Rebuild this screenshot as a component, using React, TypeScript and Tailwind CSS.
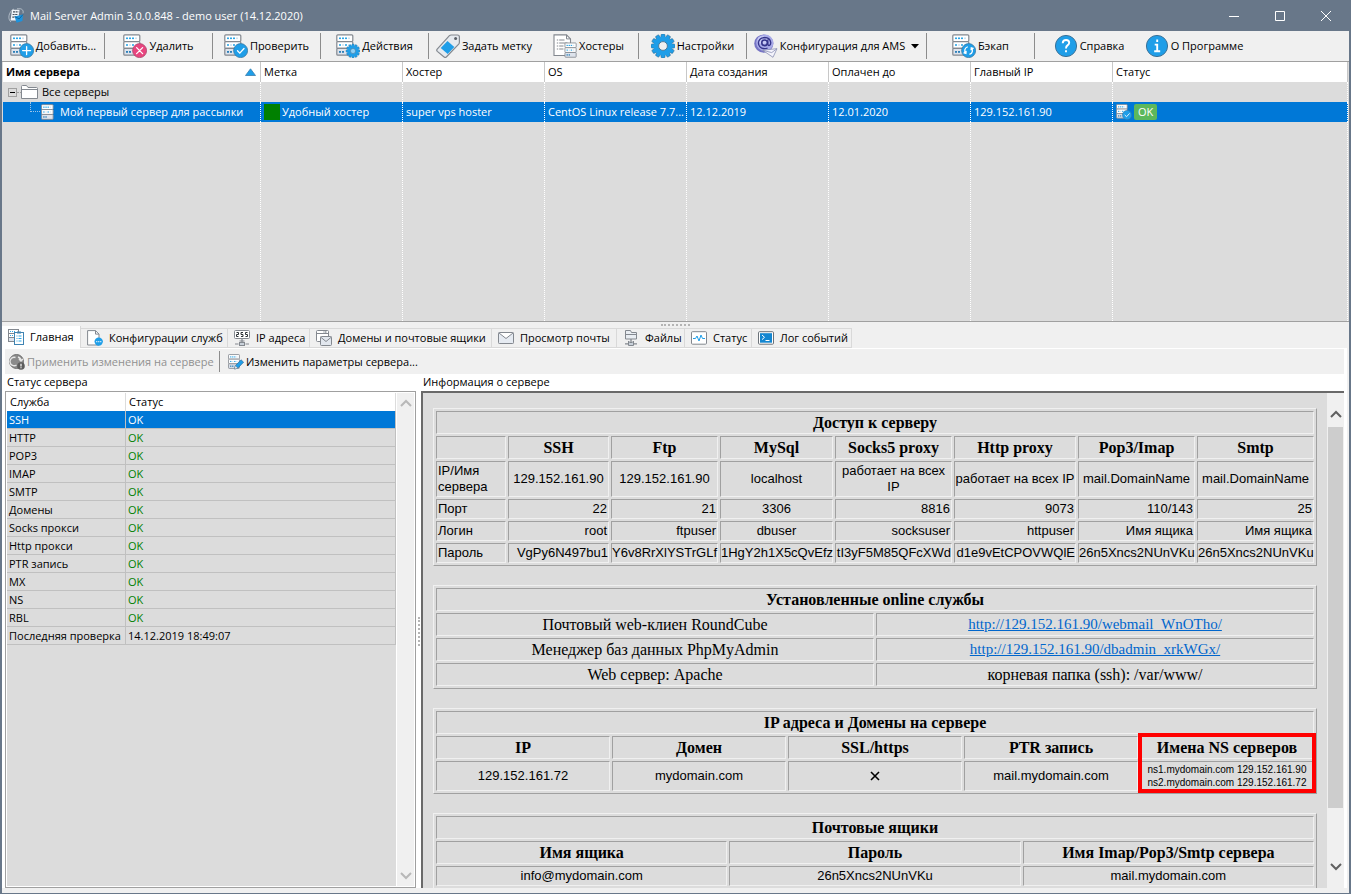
import React, { useState } from 'react';
import clsx from 'clsx';

type Badge = 'add' | 'remove' | 'check' | 'gear' | 'sync';

const GEAR_TEETH = [0, 30, 60, 90, 120, 150, 180, 210, 240, 270, 300, 330];

const Gear = ({ cx, cy, r, hole }: { cx: number; cy: number; r: number; hole: string }) => (
  <g transform={`translate(${cx} ${cy}) scale(${r / 12})`}>
    {GEAR_TEETH.map(a => (
      <rect key={a} x="-2" y="-12" width="4" height="5" rx="1.2" fill="#1f9ee8" stroke="#2b6f9b" strokeWidth=".6" transform={`rotate(${a})`} />
    ))}
    <circle r="9.6" fill="#1f9ee8" />
    <circle r="4.4" fill={hole} stroke="#4d7c9b" strokeWidth="1" />
  </g>
);

// Rack of three units, shared by most of the icons
const Rack = () => (
  <g>
    <g fill="#fff" stroke="#83888f" strokeWidth="1.2">
      <rect x=".8" y=".8" width="16" height="6.8" rx="1" />
      <rect x=".8" y="7.6" width="16" height="6.8" rx="1" />
      <rect x=".8" y="14.4" width="16" height="6.8" rx="1" fill="#dde3ec" />
    </g>
    <g fill="#2ea6e6">
      <rect x="3" y="3.5" width="2" height="1.6" />
      <rect x="6" y="3.5" width="2" height="1.6" />
      <rect x="9" y="3.5" width="2" height="1.6" />
      <rect x="3" y="10.2" width="2" height="1.6" />
      <rect x="9" y="10.2" width="2" height="1.6" />
      <rect x="3" y="17" width="2" height="1.8" fill="#2c7fb8" />
      <rect x="6" y="17" width="2" height="1.8" fill="#2c7fb8" />
    </g>
    <g fill="#cfe3f0">
      <rect x="12" y="3.5" width="2" height="1.6" />
      <rect x="6" y="10.2" width="2" height="1.6" />
      <rect x="12" y="10.2" width="2" height="1.6" />
    </g>
  </g>
);

const ServerIcon = ({ badge, className = 'size-6' }: { badge?: Badge; className?: string }) => (
  <svg viewBox={badge ? '0 0 24 24' : '0 0 18 22'} className={clsx('shrink-0', className)} fill="none">
    <Rack />
    {badge === 'gear' && <Gear cx={17} cy={17} r={7} hole="#8fd0f5" />}
    {badge && badge !== 'gear' && (
      <circle cx="16.6" cy="16.6" r="7" fill={badge === 'remove' ? '#e8457f' : '#1f9ee8'} stroke={badge === 'remove' ? '#a8456b' : '#3477a3'} strokeWidth=".8" />
    )}
    <g stroke="#fff" strokeWidth="1.3" strokeLinecap="round">
      {badge === 'add' && <path d="M16.6 12.6v8M12.6 16.6h8" />}
      {badge === 'remove' && <path d="m13.6 13.6 6 6m0-6-6 6" />}
      {badge === 'check' && <path d="m13.5 16.8 2.3 2.3 4.2-4.6" />}
      {badge === 'sync' && (
        <path d="M15.3 13a3.9 3.9 0 0 0-1.6 6.2m-1.7-.3 1.9.5.2-1.9M17.9 20.2a3.9 3.9 0 0 0 1.6-6.2m1.7.3-1.9-.5-.2 1.9" />
      )}
    </g>
  </svg>
);

const TagIcon = () => (
  <svg viewBox="0 0 24 24" className="size-6 shrink-0" fill="none">
    <path d="M1.2 15.2 13.4 1.7q.7-.7 1.8-.7h6.3q1.9 0 1.9 1.9v5.4q0 1-.7 1.8L10.3 23q-1.1 1-2.2 0L1.3 17.4q-1.1-1-.1-2.2z" fill="#e6eaef" stroke="#83888f" strokeWidth="1.2" />
    <path d="m11.5 7 6.8 5.9-6.6 7L4.7 14z" fill="#1f9ee8" />
    <circle cx="19.6" cy="4.6" r="1.5" fill="#5b6067" />
  </svg>
);

const HostersIcon = () => (
  <svg viewBox="0 0 24 24" className="size-6 shrink-0" fill="none">
    <path d="M1 .9h12.5l4 4V21.5H1z" fill="#fff" stroke="#83888f" strokeWidth="1.1" />
    <path d="M13.5.9v4h4" stroke="#83888f" />
    <path d="M3.8 6h1.4m1 0h5.3M3.8 9h1.4m1 0h8.3M3.8 12h1.4m1 0h4.3M3.8 15h1.4m1 0h4.3" stroke="#83888f" />
    <g transform="translate(11.4 8.4) scale(.7)"><Rack /></g>
  </svg>
);

const SettingsIcon = () => (
  <svg viewBox="0 0 24 24" className="size-6 shrink-0"><Gear cx={12} cy={12} r={12} hole="#f0f0f0" /></svg>
);

const AmsIcon = () => (
  <svg viewBox="0 0 24 24" className="size-6 shrink-0" fill="none">
    <ellipse cx="9.8" cy="9.6" rx="9.6" ry="9.2" fill="#7674c4" />
    <ellipse cx="10.8" cy="8.8" rx="8.6" ry="8.2" fill="#a9abe8" />
    <ellipse cx="9" cy="6" rx="5.5" ry="4" fill="#c9cbf6" />
    <circle cx="10.6" cy="8.8" r="2.8" stroke="#35348a" strokeWidth="1.6" />
    <path d="M13.8 5.6V10q.3 1.8 1.6 1.4 1.5-.7 1.3-3-.6-4.6-5.9-4.9-6 .2-6.4 5.5.3 5.2 6 5.7 1.9 0 3.2-.7" stroke="#35348a" strokeWidth="1.3" />
    <path d="m8.5 16.2 14.5-1.5-4 8.6z" fill="#f4f4fc" stroke="#8a8fb3" strokeWidth=".8" />
    <path d="m8.5 16.2 9.2 2.4 5.3-3.9" stroke="#8a8fb3" strokeWidth=".8" />
  </svg>
);

const RoundIcon = ({ kind }: { kind: 'help' | 'info' }) => (
  <svg viewBox="0 0 24 24" className="size-6 shrink-0" fill="none">
    <circle cx="12" cy="12" r="10.6" fill="#1f9ee8" stroke="#3c7298" />
    {kind === 'help' ? (
      <g stroke="#fff" strokeWidth="1.9">
        <path d="M8.7 9.2q.2-3.2 3.4-3.2 3 0 3.1 2.8 0 1.5-1.7 2.6-1.5 1-1.5 3" />
        <path d="M12 16.2v2" />
      </g>
    ) : (
      <path d="M12.2 5.6v2.3M9.7 10.6h2.5v6.6m-3 .1h6" stroke="#fff" strokeWidth="1.9" />
    )}
  </svg>
);

const AppIcon = () => (
  <svg viewBox="0 0 16 16" className="size-4 shrink-0" fill="none">
    <path d="M3 14C-1 11 1 3 6 1M9 .8c4-.8 7 .8 6 4.5" stroke="#b5bfca" strokeWidth=".9" />
    <path d="M4 1.8h7.5l-1.2 10.7H2.5z" fill="#eef3f8" />
    <path d="M5 3.8h5.5M4.6 6.5h5.5M4.3 9.2h3.5" stroke="#44505d" strokeWidth="1.2" strokeDasharray="2 .6" />
    <path d="m6.6 8.5 8.4-2-.6 6.4-5.8 1.9z" fill="#1d93dd" />
    <path d="m6.6 8.5 4.6 2.4L15 6.5" stroke="#0b5c93" strokeWidth=".8" />
  </svg>
);

const MainTabIcon = () => (
  <svg viewBox="0 0 16 16" className="size-4 shrink-0" fill="none" stroke="#83888f">
    <rect x=".5" y=".5" width="10" height="4" fill="#fff" />
    <rect x=".5" y="4.5" width="10" height="4" fill="#fff" />
    <rect x=".5" y="8.5" width="10" height="4" fill="#dde3ec" />
    <path d="M2 2.5h6M2 6.5h3" stroke="#2ea6e6" strokeDasharray="1 1" />
    <rect x="6.5" y="3.5" width="9" height="12" fill="#fff" stroke="#3f84b3" />
    <path d="M9 3.5h4" stroke="#3f84b3" strokeWidth="2" />
    <path d="M8.5 7h1m1 0h3M8.5 9.5h1m1 0h3M8.5 12h1m1 0h3" stroke="#2ea6e6" />
  </svg>
);

const ConfigTabIcon = () => (
  <svg viewBox="0 0 16 16" className="size-4 shrink-0" fill="none">
    <path d="M.6.6h7.9L12 4.1V15H.6z" fill="#fff" stroke="#83888f" />
    <path d="M8.5.6v3.5H12" stroke="#83888f" />
    <circle cx="11.7" cy="11.6" r="4.2" fill="#1f9ee8" />
    <path d="M9.3 11.6h1m1 0h1m1 0h1" stroke="#fff" strokeWidth="1.1" />
  </svg>
);

const IpTabIcon = () => (
  <svg viewBox="0 0 16 16" className="size-4 shrink-0" fill="none" stroke="#83888f">
    <rect x=".5" y=".5" width="15" height="8" rx="1" fill="#fff" />
    <path d="M2.5 2.5h2v2h-2v2h2M9 2.5H7v2h2v2H7M13.5 2.5h-2v2h2v2h-2" stroke="#2d3237" />
    <path d="M8 9v5M5.5 11h5M1 14h3.5m7 0H15" strokeWidth="1.2" />
    <rect x="5.5" y="12.5" width="5" height="3" fill="#c9d1da" />
  </svg>
);

const DomainsTabIcon = () => (
  <svg viewBox="0 0 16 16" className="size-4 shrink-0" fill="none" stroke="#83888f">
    <rect x=".5" y=".5" width="12" height="11" rx="1" fill="#fff" />
    <path d="M.5 3.5h12" />
    <path d="M7.5 2H11" stroke="#55606b" strokeDasharray="1 .5" />
    <rect x="4.5" y="6.5" width="11" height="9" rx="1" fill="#e2e7ee" />
    <path d="m4.5 7 5.5 4.500L15.500 7" />
  </svg>
);

const MailTabIcon = () => (
  <svg viewBox="0 0 16 12" className="h-3 w-4 shrink-0" fill="none" stroke="#83888f">
    <rect x=".5" y=".5" width="15" height="11" rx=".8" fill="#e6ebf2" />
    <path d="m1 1 7 5.5L15 1" fill="#fff" />
  </svg>
);

const FilesTabIcon = () => (
  <svg viewBox="0 0 16 16" className="size-4 shrink-0" fill="none" stroke="#83888f">
    <path d="M2.5.5h5l1 2h5V9h-11z" fill="#e9edf2" />
    <path d="M2.5 4.5h11" />
    <path d="M8 9v3M2 13.8h3.5m5 0H14" strokeWidth="1.3" />
    <path d="m5.5 11 1.2 1.5h2.6l1.2-1.5v4.5h-5z" fill="#c9d1da" />
  </svg>
);

const StatusTabIcon = () => (
  <svg viewBox="0 0 16 14" className="h-3.5 w-4 shrink-0" fill="none">
    <rect x=".5" y=".7" width="15" height="12.5" rx="1" fill="#fff" stroke="#83888f" />
    <path d="M2 7.500h2.500L6 5l2 5 2-6 1.500 3.500H14" stroke="#1f9ee8" />
  </svg>
);

const LogTabIcon = () => (
  <svg viewBox="0 0 16 14" className="h-3.5 w-4 shrink-0" fill="none">
    <rect x=".5" y=".7" width="15" height="12.5" rx="1" fill="#fff" stroke="#6b7178" />
    <rect x="2" y="2.2" width="12" height="9.5" fill="#1486d0" />
    <path d="m4 4 2.500 2.300L4 8.600M7.500 9.500h4" stroke="#fff" />
  </svg>
);

const ApplyIcon = () => (
  <svg viewBox="0 0 16 16" className="size-4 shrink-0" fill="none">
    <circle cx="7.5" cy="7.5" r="7" fill="#8a8a8a" stroke="#6f6f6f" />
    <path d="M6.5 3.5a4.2 4.2 0 1 0 1 7.5M9 3q3 1 3 4M10 5l2 2 2-2" stroke="#e6e6e6" strokeWidth="1.4" />
    <circle cx="12" cy="12" r="3.8" fill="#5c5c5c" />
    <path d="M12 9.7v2.700m0 .8v1" stroke="#fff" strokeWidth="1.2" />
  </svg>
);

const EditIcon = () => (
  <svg viewBox="0 0 16 16" className="size-4 shrink-0" fill="none">
    <g transform="scale(.68)"><Rack /></g>
    <path d="m6.5 15 .8-3.3L13 5.8l2.6 2.4-5.8 6z" fill="#1f9ee8" stroke="#2f6f9c" strokeWidth=".7" />
    <path d="m6.5 15 .8-3.3 2.5 2.5z" fill="#fff" stroke="#70777e" strokeWidth=".5" />
  </svg>
);

const Chevron = ({ up }: { up?: boolean }) => (
  <svg viewBox="0 0 12 8" className="h-2 w-3 shrink-0 stroke-2" fill="none" stroke="currentColor">
    <path d={up ? 'M1 7l5-5 5 5' : 'M1 1l5 5 5-5'} />
  </svg>
);

const TOOLBAR = [
  { label: 'Добавить...', icon: <ServerIcon badge="add" />, width: 'w-[103px]', divider: true },
  { label: 'Удалить', icon: <ServerIcon badge="remove" />, width: 'w-[108px]', divider: true },
  { label: 'Проверить', icon: <ServerIcon badge="check" />, width: 'w-[108px]', divider: true },
  { label: 'Действия', icon: <ServerIcon badge="gear" />, width: 'w-[108px]', divider: true },
  { label: 'Задать метку', icon: <TagIcon />, width: 'w-[110px]' },
  { label: 'Хостеры', icon: <HostersIcon />, width: 'w-[100px]', divider: true },
  { label: 'Настройки', icon: <SettingsIcon />, width: 'w-[108px]', divider: true },
  { label: 'Конфигурация для AMS', icon: <AmsIcon />, width: 'w-[180px]', divider: true, menu: true },
  { label: 'Бэкап', icon: <ServerIcon badge="sync" />, width: 'w-[108px]', divider: true },
  { label: 'Справка', icon: <RoundIcon kind="help" />, width: 'w-[108px]' },
  { label: 'О Программе', icon: <RoundIcon kind="info" />, width: 'w-[102px]' },
];

const TABS = [
  { label: 'Главная', icon: <MainTabIcon />, width: 'w-[79px]' },
  { label: 'Конфигурации служб', icon: <ConfigTabIcon />, width: 'w-[147px]' },
  { label: 'IP адреса', icon: <IpTabIcon />, width: 'w-[82px]' },
  { label: 'Домены и почтовые ящики', icon: <DomainsTabIcon />, width: 'w-[182px]' },
  { label: 'Просмотр почты', icon: <MailTabIcon />, width: 'w-[125px]' },
  { label: 'Файлы', icon: <FilesTabIcon />, width: 'w-[68px]' },
  { label: 'Статус', icon: <StatusTabIcon />, width: 'w-[67px]' },
  { label: 'Лог событий', icon: <LogTabIcon />, width: 'w-[100px]' },
];

const SERVICES = ['SSH', 'HTTP', 'POP3', 'IMAP', 'SMTP', 'Домены', 'Socks прокси', 'Http прокси', 'PTR запись', 'MX', 'NS', 'RBL'];

const ACCESS_COLS = [
  { name: 'SSH', host: '129.152.161.90', port: '22', login: 'root', password: 'VgPy6N497bu1', width: 'w-[101px]' },
  { name: 'Ftp', host: '129.152.161.90', port: '21', login: 'ftpuser', password: 'Y6v8RrXlYSTrGLf', width: 'w-[107px]' },
  { name: 'MySql', host: 'localhost', port: '3306', login: 'dbuser', password: '1HgY2h1X5cQvEfz', width: 'w-[113px]' },
  { name: 'Socks5 proxy', host: 'работает на всех IP', port: '8816', login: 'socksuser', password: 'tI3yF5M85QFcXWd', width: 'w-[117px]' },
  { name: 'Http proxy', host: 'работает на всех IP', port: '9073', login: 'httpuser', password: 'd1e9vEtCPOVWQlE', width: 'w-[122px]' },
  { name: 'Pop3/Imap', host: 'mail.DomainName', port: '110/143', login: 'Имя ящика', password: '26n5Xncs2NUnVKu', width: 'w-[117px]' },
  { name: 'Smtp', host: 'mail.DomainName', port: '25', login: 'Имя ящика', password: '26n5Xncs2NUnVKu', width: 'w-[117px]' },
];

const INFO_TABLE = 'w-full table-fixed border-separate border-spacing-0.5 border border-t-[#f0f0f0] border-l-[#f0f0f0] border-r-[#a0a0a0] border-b-[#a0a0a0]';
const INFO_CELL = 'border border-t-[#a0a0a0] border-l-[#a0a0a0] border-r-[#f0f0f0] border-b-[#f0f0f0] py-px';

const Th = ({ children, span }: { children?: React.ReactNode; span?: number }) => (
  <th colSpan={span} className={clsx(INFO_CELL, 'h-[23px] font-["Liberation_Serif",serif] text-base leading-[19px] font-bold')}>{children}</th>
);

const Td = ({ children, className = 'text-center' }: { children: React.ReactNode; className?: string }) => (
  <td className={clsx(INFO_CELL, 'text-[13px] leading-4', className)}>{children}</td>
);

const SerifTd = ({ children, size = 'text-base' }: { children: React.ReactNode; size?: string }) => (
  <td className={clsx(INFO_CELL, 'h-[23px] text-center font-["Liberation_Serif",serif]', size)}>
    <div className="leading-[19px]">{children}</div>
  </td>
);

const TitleBar = () => (
  <header className="flex h-[31px] shrink-0 items-center bg-[#687789] pl-1.5 text-white">
    <AppIcon />
    <h1 className="ml-1.5 grow">Mail Server Admin 3.0.0.848 - demo user (14.12.2020)</h1>
    <button aria-label="Свернуть" className="flex h-full w-[46px] items-center justify-center">
      <svg viewBox="0 0 10 10" className="size-2.5" stroke="#fff"><path d="M0 5.5h10" /></svg>
    </button>
    <button aria-label="Развернуть" className="flex h-full w-[46px] items-center justify-center">
      <svg viewBox="0 0 10 10" className="size-2.5" stroke="#fff" fill="none"><path d="M.5.5h9v9h-9z" /></svg>
    </button>
    <button aria-label="Закрыть" className="flex h-full w-[46px] items-center justify-center">
      <svg viewBox="0 0 10 10" className="size-2.5" stroke="#fff"><path d="M0 0l10 10M10 0L0 10" /></svg>
    </button>
  </header>
);

const Toolbar = () => (
  <div className="flex h-[30px] shrink-0 items-center bg-[#f0f0f0]">
    {TOOLBAR.map(item => (
      <button
        key={item.label}
        className={clsx('flex h-[26px] shrink-0 items-center justify-center gap-0.5 whitespace-nowrap', item.width, item.divider && 'border-r border-[#8c8c8c]')}
      >
        {item.icon}
        {item.label}
        {item.menu && (
          <svg viewBox="0 0 8 5" className="ml-1 h-[5px] w-2"><path d="M0 0h8L4 4.5z" /></svg>
        )}
      </button>
    ))}
  </div>
);

const HEAD_CELL = 'h-5 border-r border-[#c8c8c8] pl-[3px] text-left font-normal';
const ROW_CELL = 'h-5 border-r border-dotted border-white pl-[3px] whitespace-nowrap';

const ServerList = () => (
  <section className="min-h-0 grow-260 basis-0 border-y border-[#a0a0a0] bg-[#dcdcdc] px-px">
    <table className="h-full w-full table-fixed border-separate border-spacing-0">
      <colgroup>
        <col className="w-[258px]" />
        <col className="w-[142px]" />
        <col className="w-[142px]" />
        <col className="w-[142px]" />
        <col className="w-[142px]" />
        <col className="w-[142px]" />
        <col className="w-[142px]" />
        <col />
      </colgroup>
      <thead>
        <tr className="h-5 bg-white">
          <th className="h-5 border-r border-[#c8c8c8] pr-1 pl-[3px] text-left font-bold">
            <div className="flex items-center justify-between">
              Имя сервера
              <svg viewBox="0 0 11 8" className="h-2 w-[11px]"><path d="M.5 7.5 5.5.8l5 6.7z" fill="#1f9ee8" stroke="#3a7fb0" strokeWidth=".8" /></svg>
            </div>
          </th>
          {['Метка', 'Хостер', 'OS', 'Дата создания', 'Оплачен до', 'Главный IP', 'Статус'].map(name => (
            <th key={name} className={HEAD_CELL}>{name}</th>
          ))}
        </tr>
      </thead>
      <tbody>
        <tr className="h-5">
          <td className={ROW_CELL}>
            <div className="flex items-center pl-0.5">
              <button aria-label="Свернуть группу" className="size-[9px] border border-[#a0a0a0]">
                <span className="mx-auto block h-px w-[5px] bg-black" />
              </button>
              <span className="w-1 border-t border-dotted border-[#a0a0a0]" />
              <svg viewBox="0 0 17 14" className="h-3.5 w-[17px]" fill="#fff" stroke="#83888f">
                <path d="M.5 13.5v-12q0-1 1-1h4L7 2.500h8.500q1 0 1 1v10z" />
                <path d="M.5 4.5h16" />
              </svg>
              <span className="ml-1">Все серверы</span>
            </div>
          </td>
          {[1, 2, 3, 4, 5, 6, 7].map(n => <td key={n} className={ROW_CELL} />)}
        </tr>
        <tr className="h-5 bg-[#0078d7] text-white">
          <td className={ROW_CELL}>
            <div className="flex items-center pl-6">
              <span className="-mt-2.5 h-2.5 w-2.5 border-b border-l border-dotted border-[#9cc4e8]" />
              <ServerIcon className="ml-px h-4 w-[13px]" />
              <span className="ml-1.5">Мой первый сервер для рассылки</span>
            </div>
          </td>
          <td className={ROW_CELL}>
            <div className="flex items-center gap-0.5">
              <span className="size-4 bg-[#008000]" />
              Удобный хостер
            </div>
          </td>
          <td className={ROW_CELL}>super vps hoster</td>
          <td className={ROW_CELL}>CentOS Linux release 7.7...</td>
          <td className={ROW_CELL}>12.12.2019</td>
          <td className={ROW_CELL}>12.01.2020</td>
          <td className={ROW_CELL}>129.152.161.90</td>
          <td className={ROW_CELL}>
            <div className="flex items-center gap-0.5">
              <ServerIcon badge="check" className="size-4" />
              <span className="rounded-xs bg-[#5cb85c] px-1 leading-4">OK</span>
            </div>
          </td>
        </tr>
        <tr>
          {[0, 1, 2, 3, 4, 5, 6, 7].map(n => <td key={n} className="border-r border-dotted border-white" />)}
        </tr>
      </tbody>
    </table>
  </section>
);

const StatusPanel = () => (
  <section className="flex w-[411px] shrink-0 flex-col">
    <h2 className="h-[17px] pl-0.5">Статус сервера</h2>
    <div className="flex min-h-0 grow border border-[#a0a0a0] bg-white p-px">
      <div className="min-w-0 grow bg-[#dcdcdc]">
        <table className="w-full table-fixed border-separate border-spacing-0">
          <colgroup>
            <col className="w-[119px]" />
            <col />
          </colgroup>
          <thead>
            <tr className="bg-white">
              <th className="h-[18px] border-r border-[#dcdcdc] pl-[3px] text-left font-normal">Служба</th>
              <th className="h-[18px] border-r border-[#dcdcdc] pl-[3px] text-left font-normal">Статус</th>
            </tr>
          </thead>
          <tbody>
            {SERVICES.map((name, i) => (
              <tr key={name} className={i === 0 ? 'bg-[#0078d7] text-white' : undefined}>
                <td className="h-[18px] border-r border-b border-[#c0c0c0] pl-0.5">{name}</td>
                <td className={clsx('h-[18px] border-r border-b border-[#c0c0c0] pl-0.5', i > 0 && 'text-[#008000]')}>OK</td>
              </tr>
            ))}
            <tr>
              <td className="h-[18px] border-r border-b border-[#c0c0c0] pl-0.5 whitespace-nowrap">Последняя проверка</td>
              <td className="h-[18px] border-r border-b border-[#c0c0c0] pl-0.5">14.12.2019 18:49:07</td>
            </tr>
          </tbody>
        </table>
      </div>
      <div className="ml-px flex w-[17px] shrink-0 flex-col items-center justify-between bg-[#f0f0f0] py-1.5 text-[#b8b8b8]">
        <Chevron up />
        <Chevron />
      </div>
    </div>
  </section>
);

const InfoPanel = () => (
  <section className="flex min-w-0 grow flex-col">
    <h2 className="h-[17px] pl-0.5">Информация о сервере</h2>
    <div className="flex min-h-0 grow border-t-2 border-l-2 border-[#696969] bg-[#dcdcdc] font-['Liberation_Sans',sans-serif] text-black">
      <div className="flex min-w-0 grow flex-col gap-[19px] overflow-hidden px-2.5 pt-[15px]">
        <table className={INFO_TABLE}>
          <colgroup>
            <col className="w-[70px]" />
            {ACCESS_COLS.map(c => <col key={c.name} className={c.width} />)}
          </colgroup>
          <tbody>
            <tr><Th span={8}>Доступ к серверу</Th></tr>
            <tr>
              <Th />
              {ACCESS_COLS.map(c => <Th key={c.name}>{c.name}</Th>)}
            </tr>
            <tr>
              <Td className="px-px text-left">IP/Имя сервера</Td>
              {ACCESS_COLS.map(c => <Td key={c.name}>{c.host}</Td>)}
            </tr>
            <tr>
              <Td className="px-px text-left">Порт</Td>
              {ACCESS_COLS.map(c => <Td key={c.name} className={c.name === 'MySql' ? 'text-center' : 'px-px text-right'}>{c.port}</Td>)}
            </tr>
            <tr>
              <Td className="px-px text-left">Логин</Td>
              {ACCESS_COLS.map(c => <Td key={c.name} className={c.name === 'MySql' ? 'text-center' : 'px-px text-right'}>{c.login}</Td>)}
            </tr>
            <tr>
              <Td className="px-px text-left">Пароль</Td>
              {ACCESS_COLS.map(c => <Td key={c.name} className="text-right">{c.password}</Td>)}
            </tr>
          </tbody>
        </table>

        <table className={INFO_TABLE}>
          <tbody>
            <tr><Th span={2}>Установленные online службы</Th></tr>
            <tr>
              <SerifTd>Почтовый web-клиен RoundCube</SerifTd>
              <SerifTd size="text-[15px]"><a href="#webmail" className="text-[#0066cc] underline">http://129.152.161.90/webmail_WnOTho/</a></SerifTd>
            </tr>
            <tr>
              <SerifTd>Менеджер баз данных PhpMyAdmin</SerifTd>
              <SerifTd size="text-[15px]"><a href="#dbadmin" className="text-[#0066cc] underline">http://129.152.161.90/dbadmin_xrkWGx/</a></SerifTd>
            </tr>
            <tr>
              <SerifTd>Web сервер: Apache</SerifTd>
              <SerifTd>корневая папка (ssh): /var/www/</SerifTd>
            </tr>
          </tbody>
        </table>

        <div className="relative">
          <table className={INFO_TABLE}>
            <tbody>
              <tr><Th span={5}>IP адреса и Домены на сервере</Th></tr>
              <tr>
                <Th>IP</Th>
                <Th>Домен</Th>
                <Th>SSL/https</Th>
                <Th>PTR запись</Th>
                <Th>Имена NS серверов</Th>
              </tr>
              <tr>
                <Td>129.152.161.72</Td>
                <Td>mydomain.com</Td>
                <Td>
                  <svg viewBox="0 0 10 10" className="mx-auto size-2.5" stroke="#000" strokeWidth="1.6"><path d="M1 1l8 8M9 1L1 9" /></svg>
                </Td>
                <Td>mail.mydomain.com</Td>
                <td className={clsx(INFO_CELL, 'text-center text-[10px] leading-[13px] whitespace-nowrap')}>
                  ns1.mydomain.com 129.152.161.90<br />
                  ns2.mydomain.com 129.152.161.72
                </td>
              </tr>
            </tbody>
          </table>
          {/* highlight frame over the NS column */}
          <div className="absolute top-[25px] right-px bottom-px w-[178px] border-4 border-[#ff0000]" />
        </div>

        <table className={INFO_TABLE}>
          <tbody>
            <tr><Th span={3}>Почтовые ящики</Th></tr>
            <tr>
              <Th>Имя ящика</Th>
              <Th>Пароль</Th>
              <Th>Имя Imap/Pop3/Smtp сервера</Th>
            </tr>
            <tr>
              <Td>info@mydomain.com</Td>
              <Td>26n5Xncs2NUnVKu</Td>
              <Td>mail.mydomain.com</Td>
            </tr>
          </tbody>
        </table>
      </div>
      <div className="flex w-[17px] shrink-0 flex-col items-center bg-[#f0f0f0] px-px py-[17px] text-[#606060]">
        <Chevron up />
        <div className="mt-[9px] w-full grow-379 basis-0 bg-[#cdcdcd]" />
        <div className="grow-55 basis-0" />
        <Chevron />
      </div>
    </div>
  </section>
);

export default function App() {
  const [activeTab, setActiveTab] = useState('Главная');

  return (
    <div className="flex h-screen flex-col overflow-hidden border-x-2 border-b border-[#687789] bg-[#f0f0f0] font-['Open_Sans','Noto_Sans',sans-serif] text-[11px] leading-4 text-black">
      <TitleBar />
      <Toolbar />
      <ServerList />

      <div className="flex min-h-0 grow-572 basis-0 flex-col">
        <div className="flex h-1 shrink-0 items-end justify-center">
          <div className="w-[29px] border-t-2 border-dotted border-[#b4b4b4]" />
        </div>
        <div role="tablist" className="flex h-[22px] shrink-0 items-end">
          {TABS.map(tab => (
            <button
              key={tab.label}
              role="tab"
              aria-selected={tab.label === activeTab}
              onClick={() => setActiveTab(tab.label)}
              className={clsx(
                'flex shrink-0 items-center gap-1.5 border-r border-[#d9d9d9] pl-1.5 whitespace-nowrap',
                tab.width,
                tab.label === activeTab ? 'h-[22px] bg-white' : 'h-5 border-y',
              )}
            >
              {tab.icon}
              {tab.label}
            </button>
          ))}
        </div>

        <main className="mr-0.5 mb-[5px] flex min-h-0 grow flex-col bg-white px-[3px] pt-px">
          <div className="flex h-[25px] shrink-0 items-center bg-[#f0f0f0]">
            <button disabled className="flex h-[21px] w-[215px] items-center gap-0.5 border-r border-[#8c8c8c] pl-1 whitespace-nowrap text-[#909090]">
              <ApplyIcon />
              Применить изменения на сервере
            </button>
            <button className="flex items-center gap-0.5 pl-2 whitespace-nowrap">
              <EditIcon />
              Изменить параметры сервера...
            </button>
          </div>
          <div className="flex min-h-0 grow">
            <StatusPanel />
            <div className="flex w-[5px] shrink-0 items-center justify-center">
              <div className="h-[29px] border-l-2 border-dotted border-[#b4b4b4]" />
            </div>
            <InfoPanel />
          </div>
        </main>
      </div>
    </div>
  );
}
